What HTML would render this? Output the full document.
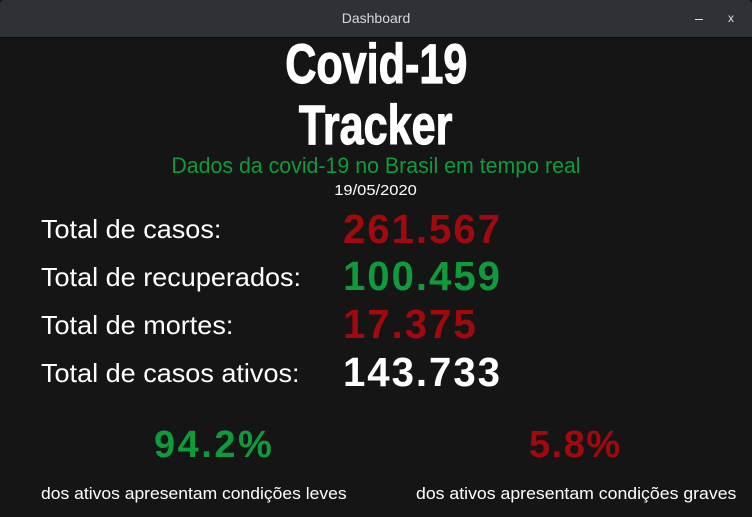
<!DOCTYPE html>
<html><head><meta charset="utf-8"><style>
*{margin:0;padding:0}
body{width:752px;height:517px;background:#151515;overflow:hidden;position:relative;font-family:"Liberation Sans",sans-serif;color:#fff}
.bar{position:absolute;left:0;top:0;width:752px;height:37px;background:#2e3236;border-bottom:1px solid #0c0c0c;border-radius:4px 4px 0 0}
.bar .t{position:absolute;left:0;width:752px;top:10px;text-align:center;font-size:14px;color:#d8d8d8}
.c{position:absolute;left:0;width:752px;text-align:center;white-space:nowrap}
.c span{display:inline-block}
.a{position:absolute;white-space:nowrap;transform-origin:left top}
.lab{font-size:26px;transform:scaleX(1.04)}
.num{font-size:41px;font-weight:bold;letter-spacing:2px;transform:scaleX(.98)}
.r{color:#a00a0e}.g{color:#0f9b3c}
.big{-webkit-text-stroke:1.2px #fff}
</style></head><body>
<div class="bar"><div class="t">Dashboard</div>
<div style="position:absolute;left:695px;top:19px;width:8px;height:1px;background:#ddd"></div>
<div style="position:absolute;left:728px;top:11px;font-size:12px;color:#ddd">x</div></div>
<div class="c big" style="top:35px;font-size:56px;font-weight:bold;line-height:57px"><span style="transform:scaleX(.77)">Covid-19</span></div>
<div class="c big" style="top:96px;font-size:56px;font-weight:bold;line-height:57px"><span style="transform:scaleX(.77)">Tracker</span></div>
<div class="c g" style="top:153px;font-size:22px;line-height:26px"><span style="transform:scaleX(.97)">Dados da covid-19 no Brasil em tempo real</span></div>
<div class="c" style="top:182px;font-size:15px;line-height:18px"><span style="transform:scaleX(1.1)">19/05/2020</span></div>

<div class="a lab" style="left:41px;top:214px">Total de casos:</div>
<div class="a lab" style="left:41px;top:262px">Total de recuperados:</div>
<div class="a lab" style="left:41px;top:310px">Total de mortes:</div>
<div class="a lab" style="left:41px;top:358px">Total de casos ativos:</div>
<div class="a num r" style="left:343px;top:206px">261.567</div>
<div class="a num g" style="left:343px;top:253px">100.459</div>
<div class="a num r" style="left:343px;top:301px">17.375</div>
<div class="a num" style="left:343px;top:349px">143.733</div>

<div class="a g" style="left:154px;top:424px;font-size:38px;font-weight:bold;letter-spacing:2.5px">94.2%</div>
<div class="a r" style="left:529px;top:424px;font-size:38px;font-weight:bold;letter-spacing:1.5px">5.8%</div>
<div class="a" style="left:41px;top:484px;font-size:17px;transform:scaleX(1.03)">dos ativos apresentam condições leves</div>
<div class="a" style="left:416px;top:484px;font-size:17px;transform:scaleX(1.04)">dos ativos apresentam condições graves</div>
</body></html>
